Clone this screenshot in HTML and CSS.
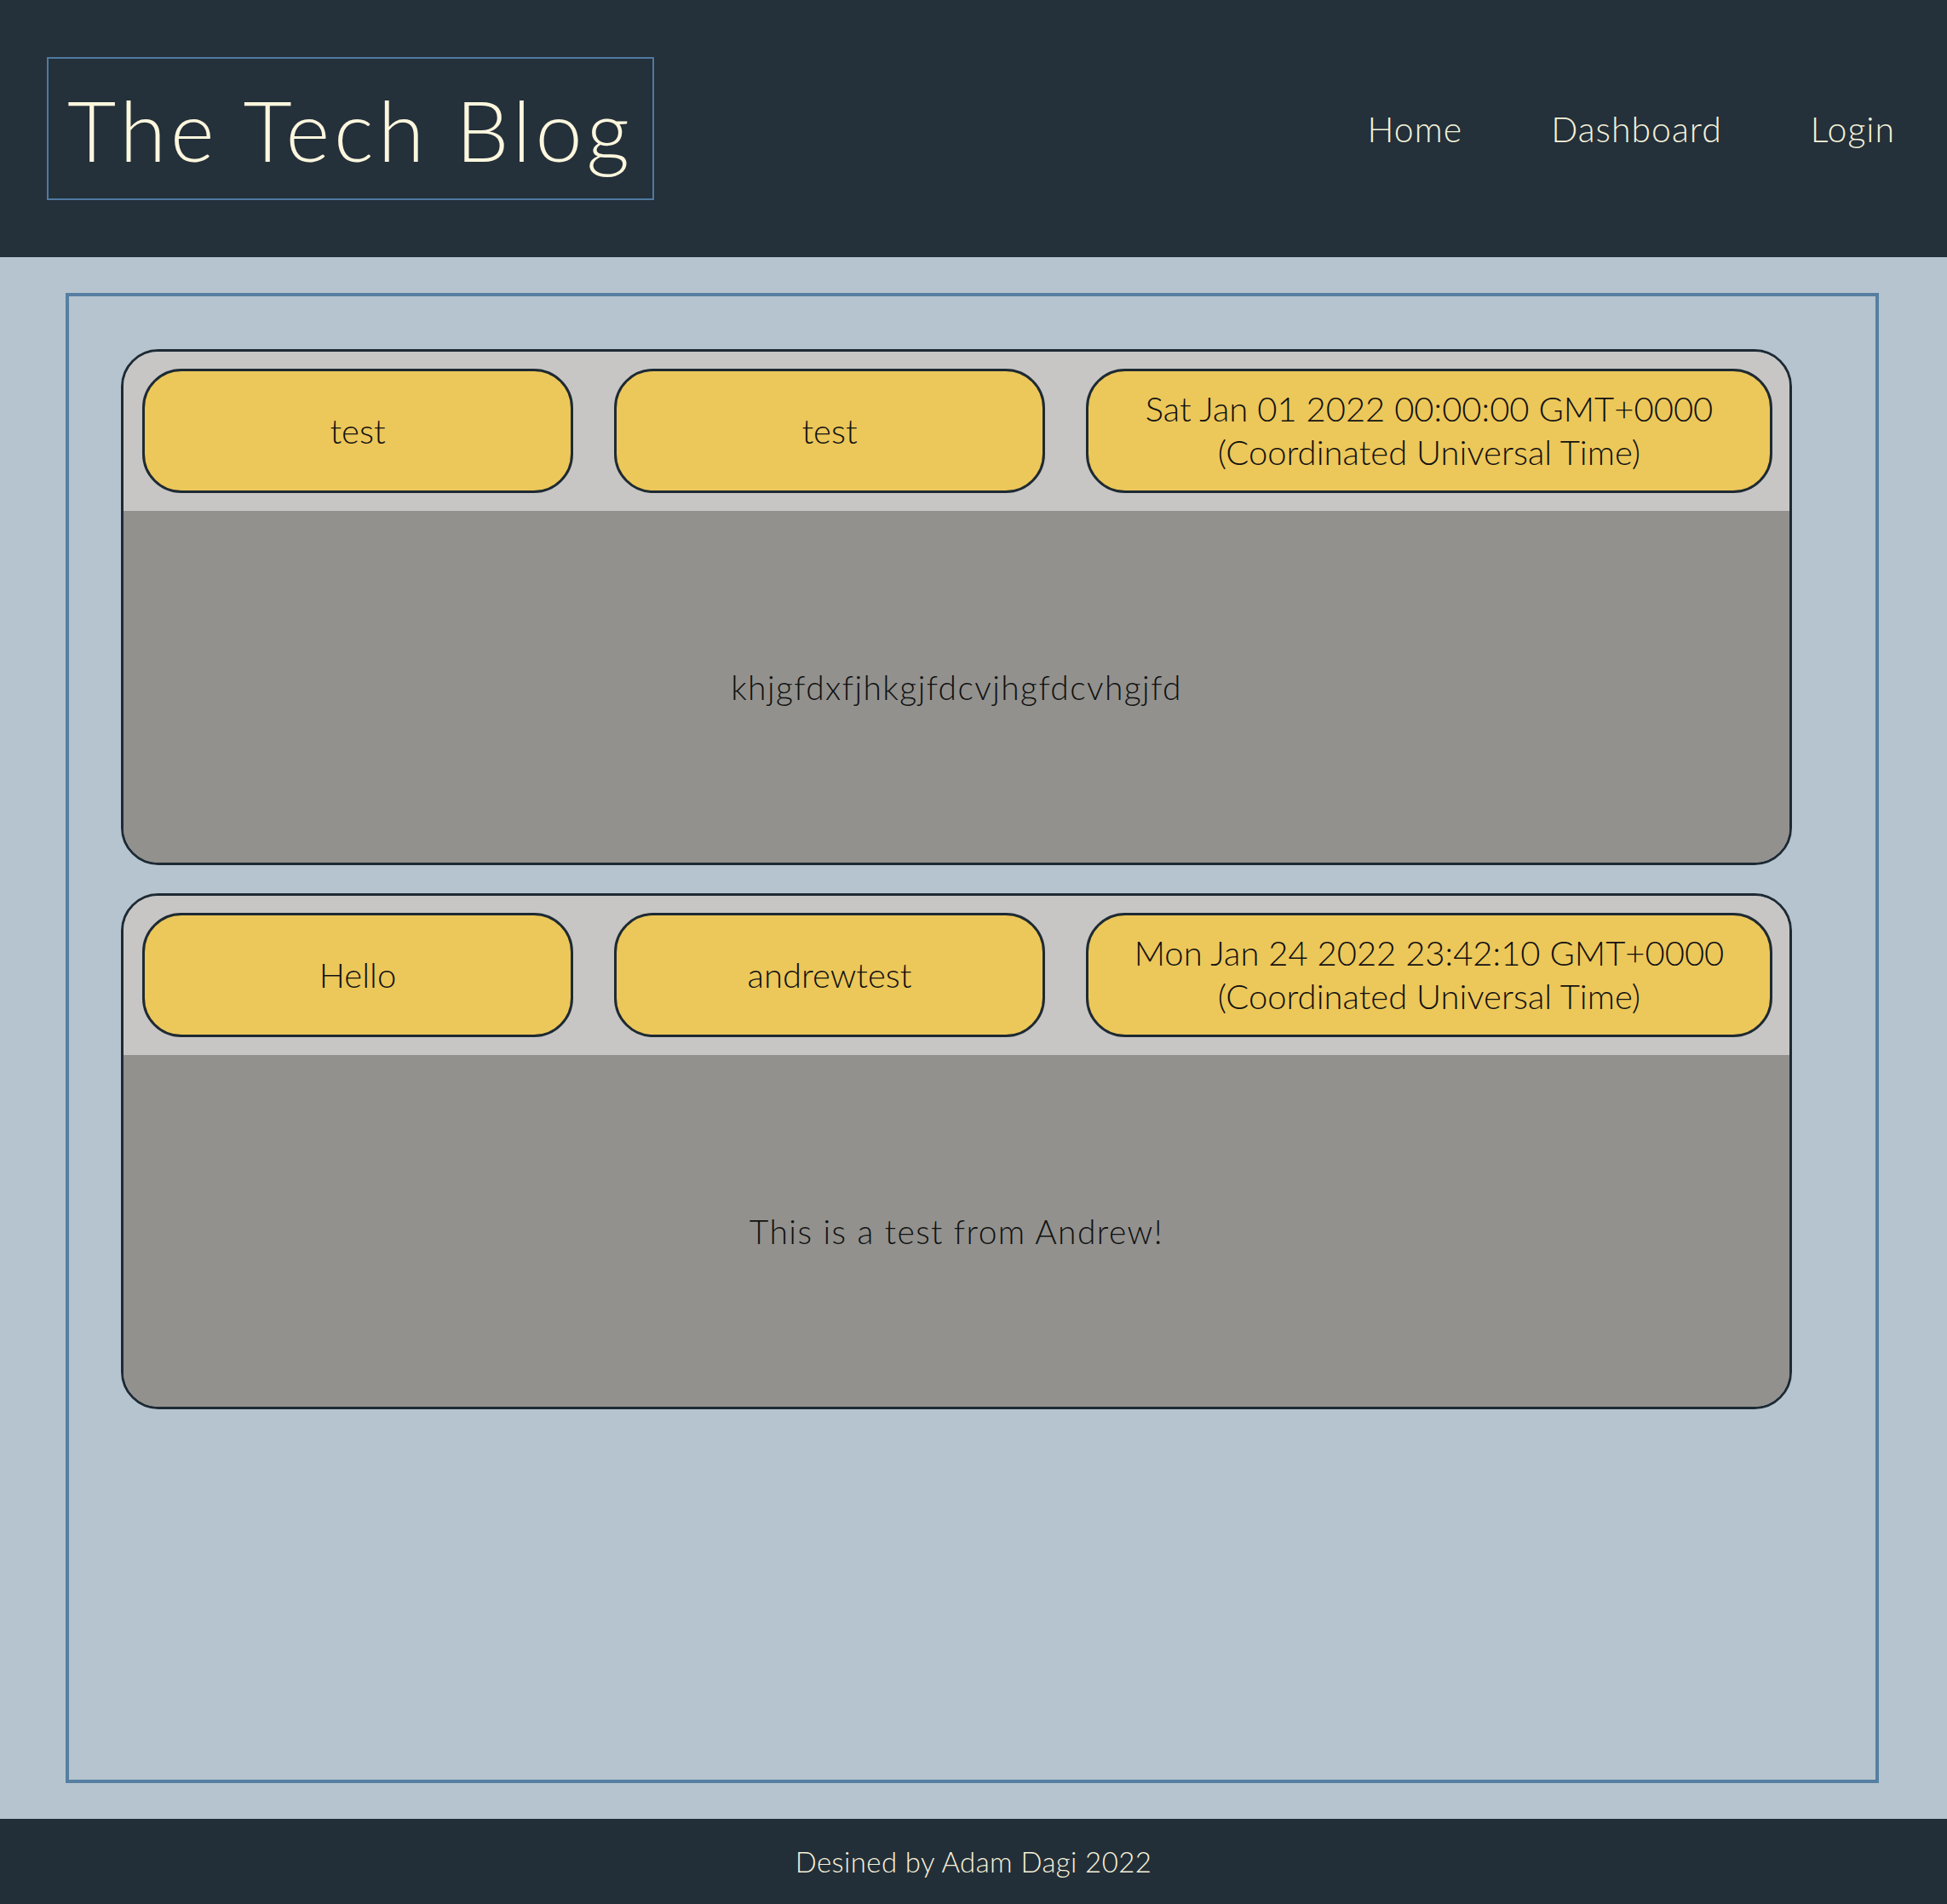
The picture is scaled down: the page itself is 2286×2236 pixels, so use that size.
FILE: index.html
```html
<!DOCTYPE html>
<html lang="en">
<head>
<meta charset="utf-8">
<title>The Tech Blog</title>
<link rel="stylesheet" href="styles.css">
</head>
<body>
<header class="site-header">
  <div class="brand"><h1 class="brand-title">The Tech Blog</h1></div>
  <nav class="nav">
    <a class="nav-link" href="#">Home</a>
    <a class="nav-link" href="#">Dashboard</a>
    <a class="nav-link" href="#">Login</a>
  </nav>
</header>
<main class="main">
  <section class="container">
    <article class="post">
      <div class="post-head">
        <div class="pill">test</div>
        <div class="pill">test</div>
        <div class="pill">Sat Jan 01 2022 00:00:00 GMT+0000 (Coordinated Universal Time)</div>
      </div>
      <div class="post-body">khjgfdxfjhkgjfdcvjhgfdcvhgjfd</div>
    </article>
    <article class="post">
      <div class="post-head">
        <div class="pill">Hello</div>
        <div class="pill">andrewtest</div>
        <div class="pill">Mon Jan 24 2022 23:42:10 GMT+0000 (Coordinated Universal Time)</div>
      </div>
      <div class="post-body">This is a test from Andrew!</div>
    </article>
  </section>
</main>
<footer class="site-footer">Desined by Adam Dagi 2022</footer>
</body>
</html>
```
FILE: styles.css
```css
* { box-sizing: border-box; }
html, body { margin: 0; padding: 0; }
body {
  min-height: 100vh;
  display: flex;
  flex-direction: column;
  font-family: "Lato", "Open Sans", sans-serif;
  font-weight: 300;
  background: #b5c4cf;
  color: #111;
}
.site-header {
  height: 302px;
  background: #24303a;
  display: flex;
  align-items: center;
  justify-content: space-between;
  padding: 0 61px 0 55px;
  flex-shrink: 0;
}
.brand {
  width: 713px;
  height: 168px;
  border: 2px solid #4f7aa0;
  display: flex;
  align-items: center;
  padding-left: 22px;
}
.brand-title {
  margin: 0;
  font-weight: 300;
  font-size: 99px;
  letter-spacing: 5px;
  line-height: 1;
  color: #fdf7de;
  white-space: nowrap;
}
.nav { display: flex; gap: 104px; align-items: center; }
.nav-link {
  color: #f6f2d9;
  text-decoration: none;
  font-size: 41px;
  letter-spacing: 1px;
  font-weight: 300;
}
.main {
  flex: 1;
  display: flex;
  padding: 42px 80px 42px 77px;
}
.container {
  flex: 1;
  border: 4px solid #567fa2;
  padding: 62px 98px 40px 61px;
}
.post {
  border: 3px solid #1e2a33;
  border-radius: 44px;
  overflow: hidden;
  margin-bottom: 33px;
}
.post-head {
  background: #c7c6c4;
  padding: 20px 20px 21px 22px;
  display: grid;
  grid-template-columns: 506fr 506fr 806fr;
  column-gap: 48px;
}
.pill {
  height: 146px;
  border: 3px solid #1e2a33;
  border-radius: 46px;
  background: #ecc75a;
  display: flex;
  align-items: center;
  justify-content: center;
  text-align: center;
  font-size: 40px;
  line-height: 51px;
  padding: 0 50px;
  color: #111;
}
.post-body {
  height: 413px;
  background: #92918e;
  display: flex;
  align-items: center;
  justify-content: center;
  font-size: 39px;
  letter-spacing: 1.4px;
  color: #111;
}
.site-footer {
  height: 100px;
  flex-shrink: 0;
  background: #232f38;
  color: #f8f2dc;
  display: flex;
  align-items: center;
  justify-content: center;
  font-size: 33px;
  letter-spacing: 0.4px;
}
```
